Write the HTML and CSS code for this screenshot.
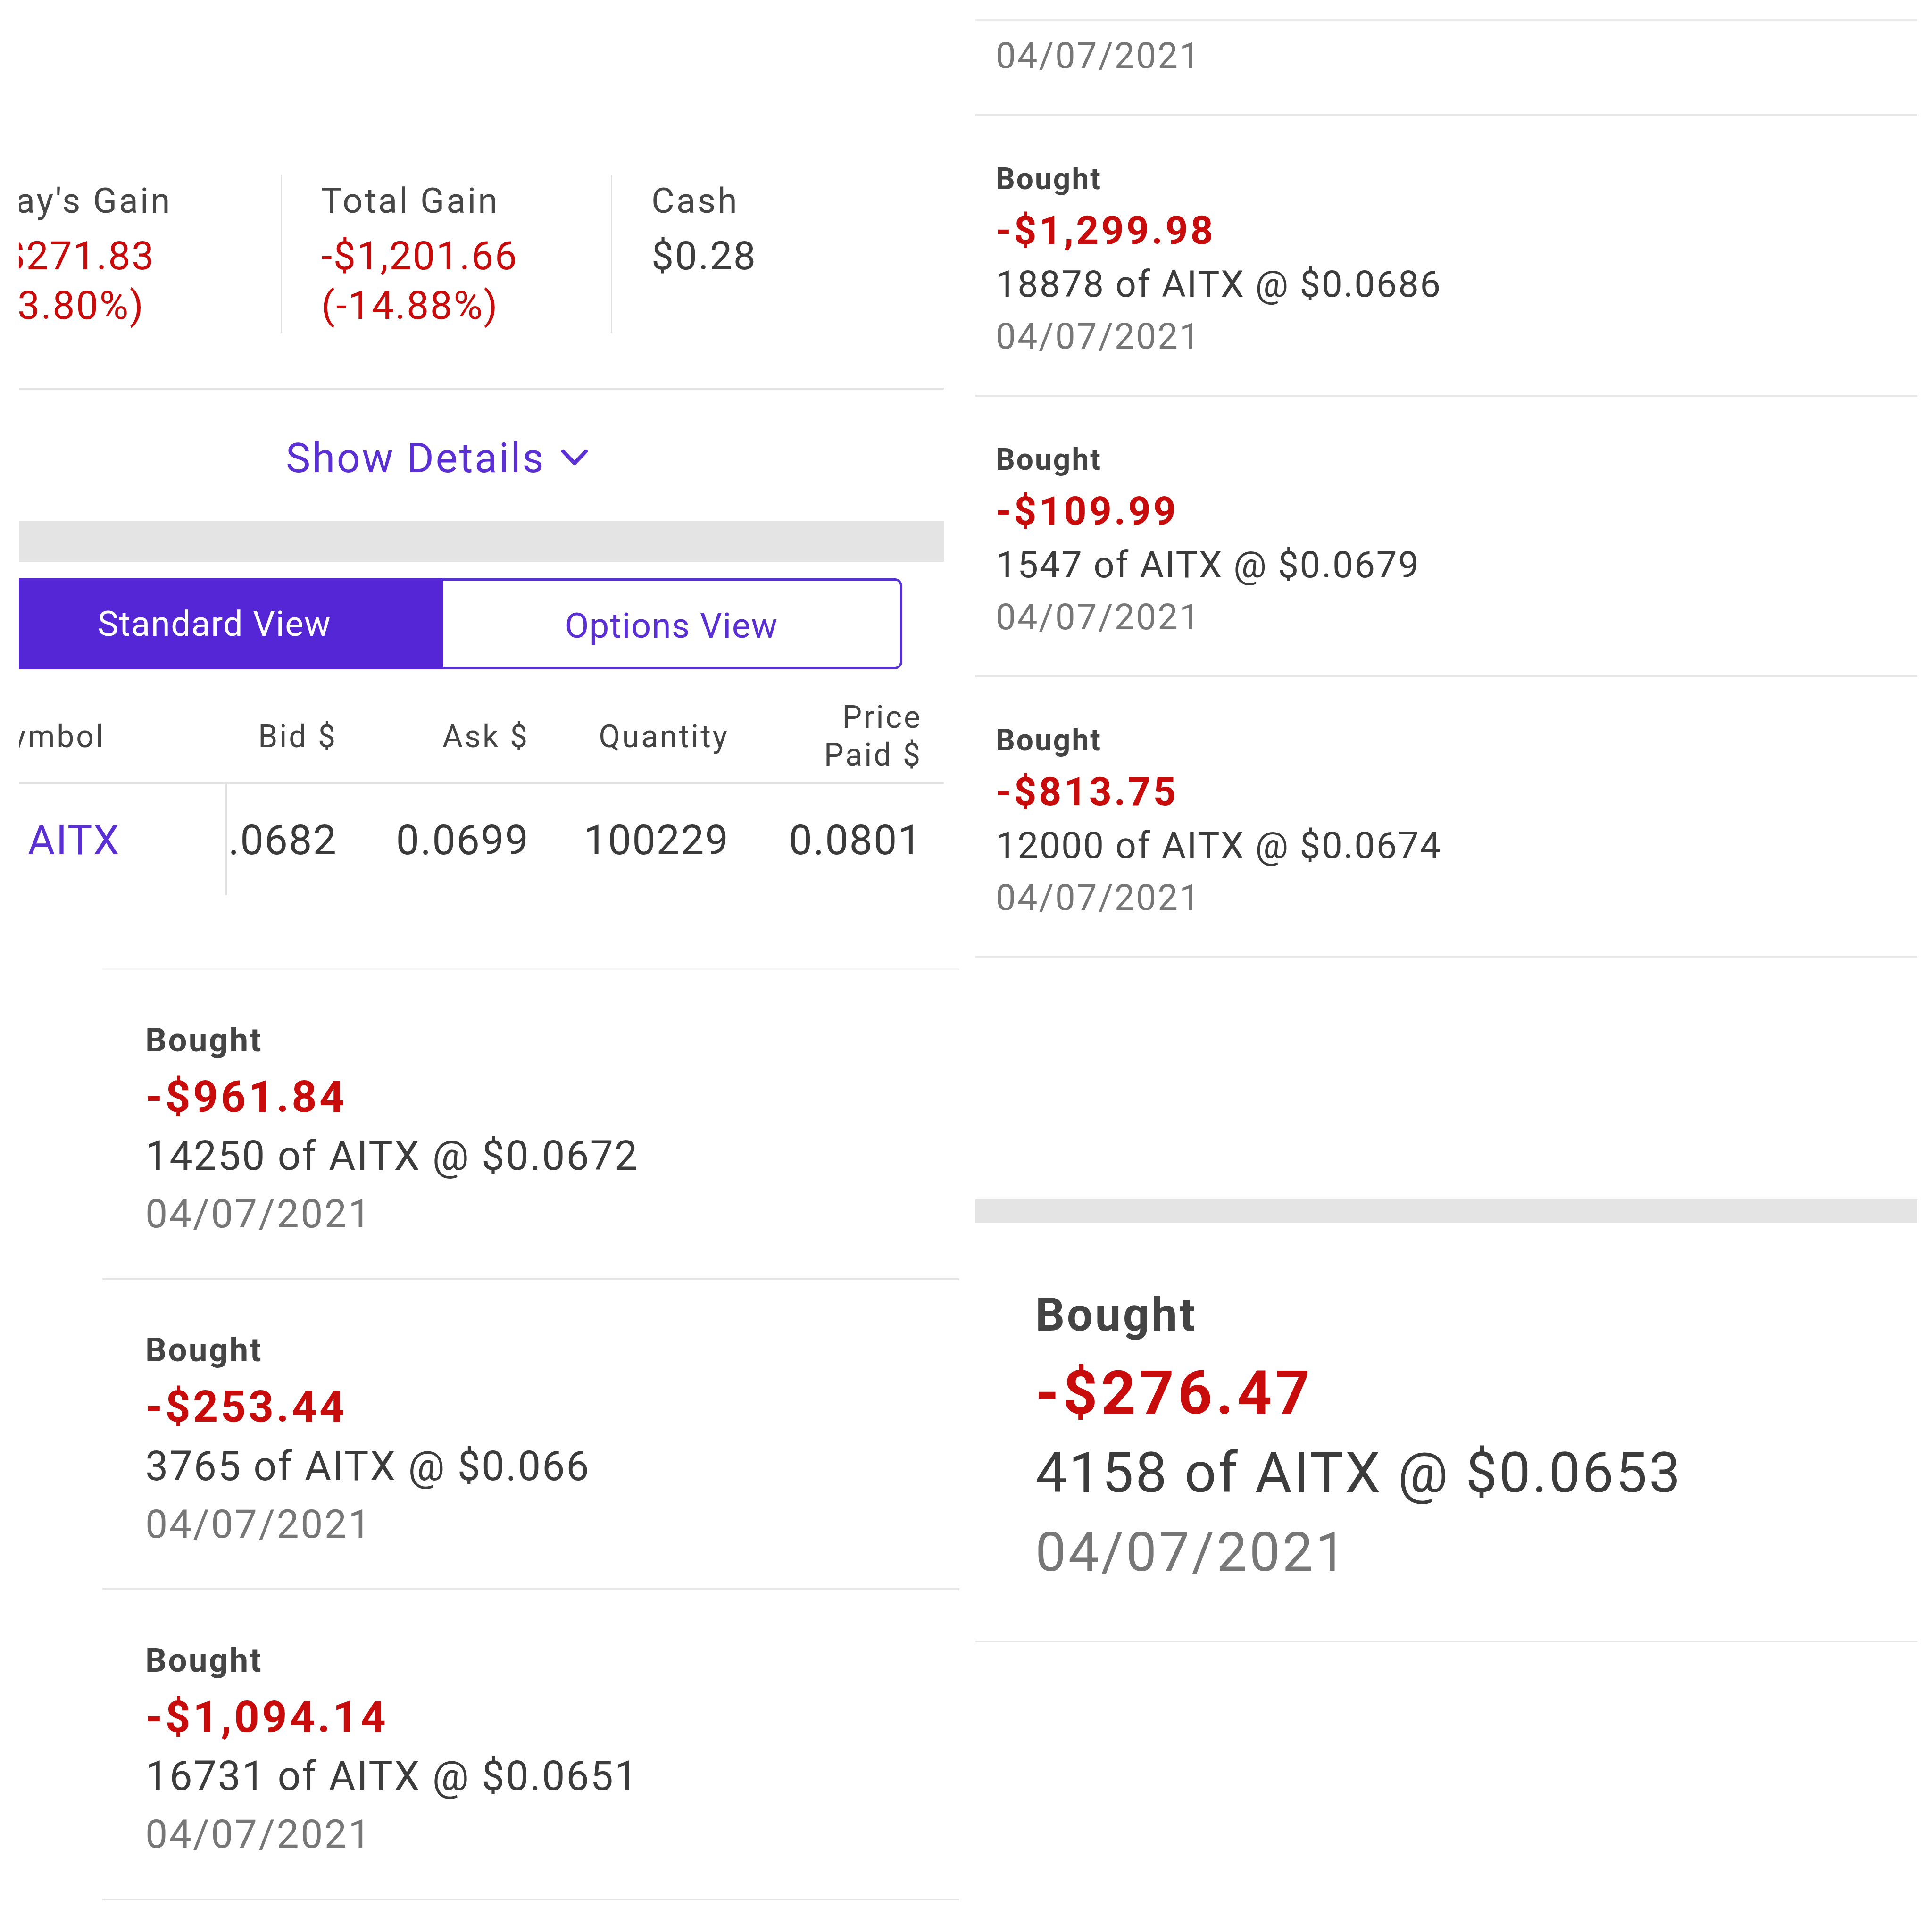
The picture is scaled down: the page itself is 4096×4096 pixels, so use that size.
FILE: index.html
```html
<!DOCTYPE html>
<html lang="en">

<head>
    <meta charset="UTF-8">
    <meta name="viewport" content="width=device-width, initial-scale=1.0">
    <title>Portfolio - AITX</title>
    <link rel="stylesheet" href="styles.css">
</head>

<body>

    <div id="collage">

        <div class="column">

            <!-- summary screen, cropped on the left -->
            <div id="summary">
                <div class="screen">

                    <div class="stats">
                        <div class="stat">
                            <div class="stat-label">Day's Gain</div>
                            <div class="stat-value loss">-$271.83</div>
                            <div class="stat-value loss">(-3.80%)</div>
                        </div>
                        <div class="stat">
                            <div class="stat-label">Total Gain</div>
                            <div class="stat-value loss">-$1,201.66</div>
                            <div class="stat-value loss">(-14.88%)</div>
                        </div>
                        <div class="stat">
                            <div class="stat-label">Cash</div>
                            <div class="stat-value">$0.28</div>
                        </div>
                    </div>

                    <div class="rule"></div>

                    <div class="details-toggle">
                        Show Details
                        <svg class="chevron" viewBox="0 0 56 36">
                            <path d="M4 5 L28 30 L52 5" fill="none" stroke="#5a2fd4" stroke-width="8" stroke-linecap="round" stroke-linejoin="round" />
                        </svg>
                    </div>

                    <div class="band"></div>

                    <div class="segment">
                        <div class="seg-btn active">Standard View</div>
                        <div class="seg-btn idle">Options View</div>
                    </div>

                    <div class="positions">
                        <div class="pos-head">
                            <div class="cell sym">Symbol</div>
                            <div class="cell">Bid $</div>
                            <div class="cell">Ask $</div>
                            <div class="cell">Quantity</div>
                            <div class="cell"><span class="two-line">Price<br>Paid $</span></div>
                            <div class="cell"></div>
                        </div>
                        <div class="pos-row">
                            <div class="cell sym">AITX</div>
                            <div class="cell">0.0682</div>
                            <div class="cell">0.0699</div>
                            <div class="cell">100229</div>
                            <div class="cell">0.0801</div>
                            <div class="cell"></div>
                        </div>
                    </div>

                </div>
            </div>

            <div class="feed feed-mid">
                <div class="txn">
                    <div class="txn-type">Bought</div>
                    <div class="txn-amount">-$961.84</div>
                    <div class="txn-detail">14250 of AITX @ $0.0672</div>
                    <div class="txn-date">04/07/2021</div>
                </div>
                <div class="txn">
                    <div class="txn-type">Bought</div>
                    <div class="txn-amount">-$253.44</div>
                    <div class="txn-detail">3765 of AITX @ $0.066</div>
                    <div class="txn-date">04/07/2021</div>
                </div>
                <div class="txn">
                    <div class="txn-type">Bought</div>
                    <div class="txn-amount">-$1,094.14</div>
                    <div class="txn-detail">16731 of AITX @ $0.0651</div>
                    <div class="txn-date">04/07/2021</div>
                </div>
            </div>

        </div>

        <div class="column">

            <div class="feed feed-top">
                <div class="clip-top"></div>
                <div class="txn partial">
                    <div class="txn-date">04/07/2021</div>
                </div>
                <div class="txn">
                    <div class="txn-type">Bought</div>
                    <div class="txn-amount">-$1,299.98</div>
                    <div class="txn-detail">18878 of AITX @ $0.0686</div>
                    <div class="txn-date">04/07/2021</div>
                </div>
                <div class="txn">
                    <div class="txn-type">Bought</div>
                    <div class="txn-amount">-$109.99</div>
                    <div class="txn-detail">1547 of AITX @ $0.0679</div>
                    <div class="txn-date">04/07/2021</div>
                </div>
                <div class="txn">
                    <div class="txn-type">Bought</div>
                    <div class="txn-amount">-$813.75</div>
                    <div class="txn-detail">12000 of AITX @ $0.0674</div>
                    <div class="txn-date">04/07/2021</div>
                </div>
            </div>

            <div class="feed feed-last">
                <div class="band thin"></div>
                <div class="txn">
                    <div class="txn-type">Bought</div>
                    <div class="txn-amount">-$276.47</div>
                    <div class="txn-detail">4158 of AITX @ $0.0653</div>
                    <div class="txn-date">04/07/2021</div>
                </div>
            </div>

        </div>

    </div>

</body>

</html>
```

FILE: styles.css
```css
body {
    margin: 0;
    background: #ffffff;
    font-family: Roboto, "Noto Sans", sans-serif;
    color: #3c3c3c;
}

#collage {
    display: grid;
    grid-template-columns: 2048px 2048px;
    width: 4096px;
    height: 4096px;
    overflow: hidden;
}

/* ---------- summary screen ---------- */

#summary {
    margin-left: 40px;
    width: 1961px;
    height: 2053px;
    overflow: hidden;
}

.screen {
    margin-left: -90px;
    width: 2051px;
    padding-top: 370px;
}

.stats {
    display: flex;
    padding-left: 30px;
}

.stat {
    width: 615px;
    height: 335px;
    box-sizing: border-box;
    padding-top: 5px;
}

.stat + .stat {
    width: 700px;
    border-left: 3px solid #e0e0e0;
    padding-left: 83px;
}

.stat-label {
    font-size: 75px;
    line-height: 100px;
    letter-spacing: 4px;
    color: #474747;
    margin-bottom: 15px;
    white-space: nowrap;
}

.stat-value {
    font-size: 84px;
    line-height: 105px;
    letter-spacing: 2.5px;
    color: #3d3d3d;
    white-space: nowrap;
}

.loss {
    color: #c80c0c;
}

.rule {
    height: 4px;
    margin-top: 117px;
    background: #e3e3e3;
}

.details-toggle {
    display: flex;
    align-items: center;
    height: 120px;
    margin-top: 84px;
    padding-left: 656px;
    font-size: 88px;
    letter-spacing: 3.5px;
    color: #5a2fd4;
}

.chevron {
    width: 56px;
    height: 36px;
    margin-left: 34px;
}

.band {
    height: 87px;
    margin-top: 74px;
    background: #e4e4e4;
}

.band.thin {
    height: 50px;
    margin-top: 0;
}

.segment {
    display: flex;
    width: 1943px;
    height: 193px;
    margin-top: 35px;
    margin-left: 20px;
}

.seg-btn {
    flex: 1;
    display: flex;
    align-items: center;
    justify-content: center;
    box-sizing: border-box;
    font-size: 74px;
    letter-spacing: 1.5px;
}

.seg-btn.active {
    background: #5526d6;
    color: #ffffff;
    border-radius: 16px 0 0 16px;
}

.seg-btn.idle {
    border: 5px solid #5533d2;
    border-left: none;
    border-radius: 0 16px 16px 0;
    color: #5a2fd4;
    padding-top: 8px;
}

.positions {
    margin-top: 21px;
}

.pos-head,
.pos-row {
    display: grid;
    grid-template-columns: 531px 234px 407px 424px 409px 1fr;
}

.pos-head {
    height: 222px;
    box-sizing: border-box;
    padding-top: 24px;
    border-bottom: 4px solid #e3e3e3;
    font-size: 66px;
    letter-spacing: 4px;
    color: #444444;
}

.pos-row {
    height: 236px;
    font-size: 88px;
    letter-spacing: 2px;
    color: #3a3a3a;
}

.cell {
    display: flex;
    align-items: center;
    justify-content: flex-end;
    overflow: hidden;
    white-space: nowrap;
}

.cell.sym {
    justify-content: flex-start;
    padding-left: 30px;
}

.pos-row .cell.sym {
    padding-left: 109px;
    color: #5a2fd4;
    border-right: 3px solid #e0e0e0;
}

.two-line {
    display: block;
    text-align: right;
    line-height: 80px;
}

/* ---------- transaction feeds ---------- */

.feed-top {
    margin-left: 20px;
    width: 1997px;
    font-size: 80px;
}

.feed-top .txn {
    padding-left: 43px;
}

.feed-mid {
    margin-left: 217px;
    width: 1817px;
    border-top: 3px solid #f5f5f5;
    font-size: 88.5px;
}

.feed-mid .txn {
    padding-left: 91px;
}

.feed-last {
    margin-left: 20px;
    margin-top: 511px;
    width: 1997px;
    font-size: 122px;
}

.feed-last .txn {
    padding-left: 127px;
    padding-top: 0.96em;
}

.feed-last .txn-amount {
    line-height: 1.34;
}

.feed-last .txn-detail {
    line-height: 1.41;
}

.clip-top {
    height: 40px;
    border-bottom: 4px solid #ececec;
}

.txn {
    padding-top: 1.025em;
    padding-bottom: 0.85em;
    border-bottom: 4px solid #e6e6e6;
    white-space: nowrap;
}

.txn.partial {
    padding-top: 20px;
}

.txn-type {
    font-size: 0.8em;
    line-height: 1.625;
    font-weight: bold;
    letter-spacing: 0.047em;
    color: #444444;
}

.txn-amount {
    font-size: 1.05em;
    line-height: 1.369;
    font-weight: bold;
    letter-spacing: 0.06em;
    color: #c80c0c;
}

.txn-detail {
    font-size: 0.975em;
    line-height: 1.436;
    letter-spacing: 0.032em;
    color: #3c3c3c;
}

.txn-date {
    font-size: 0.95em;
    line-height: 1.447;
    letter-spacing: 0.04em;
    color: #777777;
}
```
